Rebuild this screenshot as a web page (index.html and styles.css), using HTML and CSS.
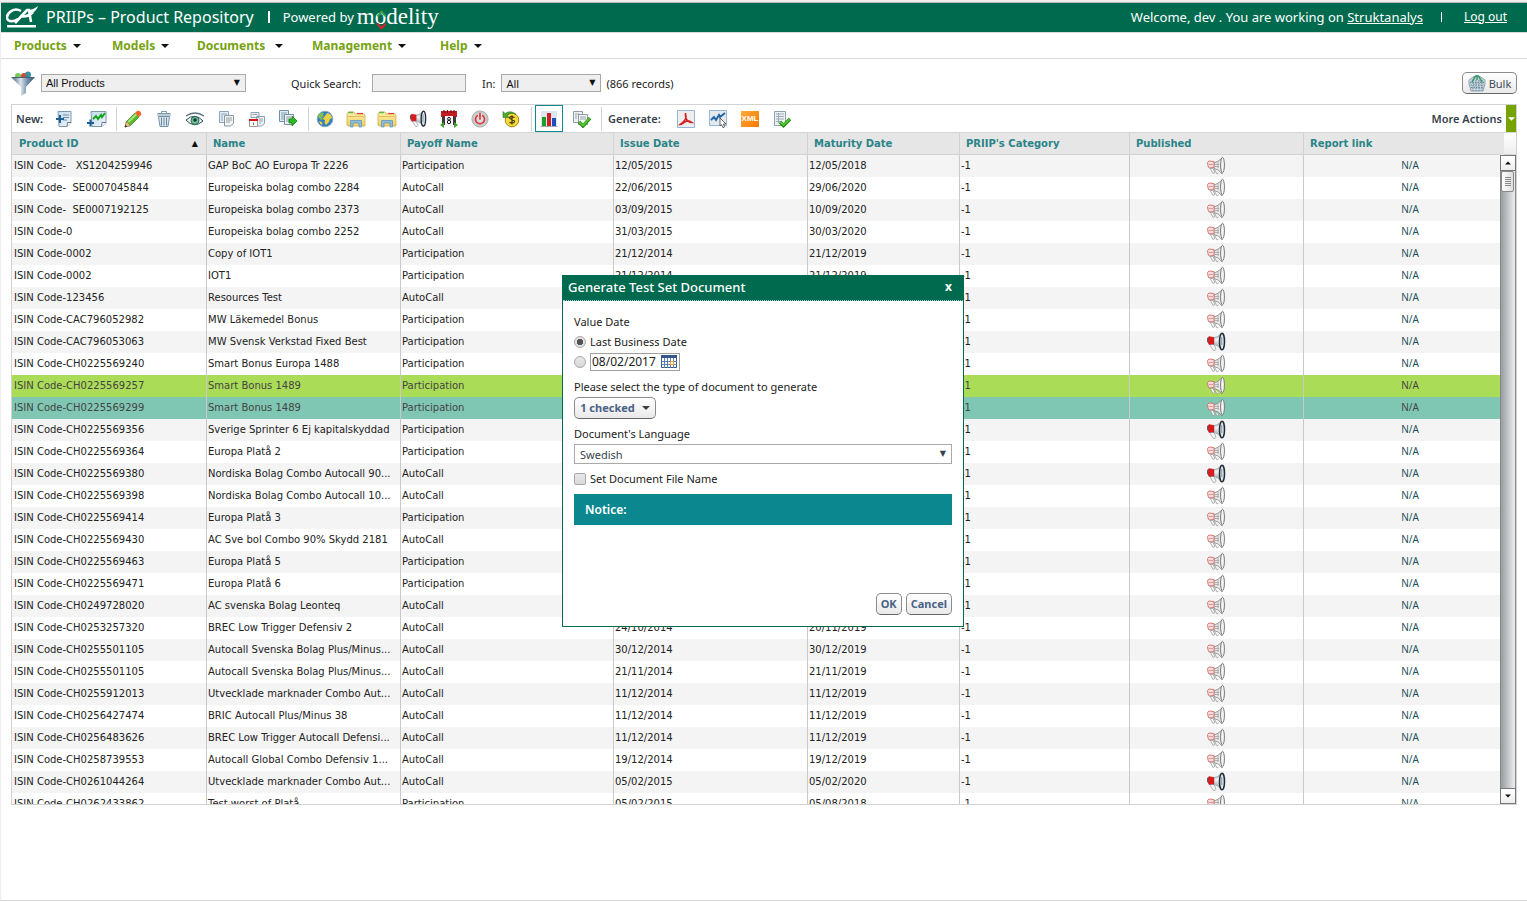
FILE: index.html
```html
<!DOCTYPE html>
<html lang="en">
<head>
<meta charset="utf-8">
<title>PRIIPs – Product Repository</title>
<link rel="stylesheet" href="styles.css">
</head>
<body>
<svg class="sprite" aria-hidden="true">
  <defs>
    <linearGradient id="g-paper" x1="0" y1="0" x2="1" y2="1"><stop offset="0" stop-color="#c3dcf0"/><stop offset="1" stop-color="#eef2f5"/></linearGradient>
    <linearGradient id="g-funnel" x1="0" y1="0" x2="1" y2="0"><stop offset="0" stop-color="#35516b"/><stop offset=".4" stop-color="#dbe5ed"/><stop offset=".65" stop-color="#7d98b0"/><stop offset="1" stop-color="#2f4d6b"/></linearGradient>
    <linearGradient id="g-folder" x1="0" y1="0" x2="0" y2="1"><stop offset="0" stop-color="#fbf0b4"/><stop offset="1" stop-color="#f1d25c"/></linearGradient>
    <linearGradient id="g-horn" x1="0" y1="0" x2="0" y2="1"><stop offset="0" stop-color="#9ba5ab"/><stop offset=".4" stop-color="#f2f4f5"/><stop offset="1" stop-color="#77838a"/></linearGradient>
    <symbol id="doc-add" viewBox="0 0 18 18"><path d="M3 1.500h13v11l-4 4H4z" fill="url(#g-paper)" stroke="#7e99ad"/><path d="M12 16.500l.5-4H16" fill="#fff" stroke="#5e7688"/><path d="M8 5h6M8 7.500h6M8 10h4" stroke="#7590a4"/><path d="M1 9h8M5 5v8" stroke="#1c5f93" stroke-width="2"/></symbol>
    <symbol id="chart-add" viewBox="0 0 20 18"><path d="M4 1.500h15v11l-4 4H5z" fill="url(#g-paper)" stroke="#7e99ad"/><path d="M14.500 16.500l.5-4h4" fill="#fff" stroke="#5e7688"/><path d="M6 9l3-3 2 3 3-4 1 2 3-4" fill="none" stroke="#14a51e" stroke-width="2"/><path d="M0 13h7M3.500 9.500v7" stroke="#1c5f93" stroke-width="2"/></symbol>
    <symbol id="pencil" viewBox="0 0 18 18"><path d="M1 17l1.500-5.500L11 3l4 4-8.500 8.500z" fill="#56b92b" stroke="#3b7f1c" stroke-width=".7"/><path d="M3.500 11.500L12 3l1.500 1.500L5 13z" fill="#a7e277"/><path d="M11 3l2-2q2-.8 3.400.8T17 5l-2 2z" fill="#f0642c"/><path d="M1 17l1.500-5.500 4 4z" fill="#edc48a" stroke="#8a6033" stroke-width=".5"/><path d="M.8 17.200l.7-2.400 1.700 1.700z" fill="#333"/></symbol>
    <symbol id="trash" viewBox="0 0 18 18"><path d="M2 5h14M6.500 3V1.500h5V3M2.500 3.500h13" fill="none" stroke="#7d98ab"/><path d="M3.500 6.500h11L13 16.500H5z" fill="#dbe6ee" stroke="#7593a8"/><path d="M6.500 7.500v8M9 7.500v8M11.500 7.500v8" stroke="#668aa3"/></symbol>
    <symbol id="eye" viewBox="0 0 20 18"><path d="M1 6q9-6 18 0" fill="none" stroke="#5c7183" stroke-width="1.500"/><path d="M1 10q9-8 17 1-9 8-17-1z" fill="#f3f7f7" stroke="#2d4a59"/><circle cx="10" cy="10.500" r="4" fill="#6fc098" stroke="#2c6a56"/><circle cx="10" cy="10" r="1.800" fill="#173c38"/></symbol>
    <symbol id="copy" viewBox="0 0 18 18"><path d="M2.500 1.500h9v11h-9z" fill="#e4edf5" stroke="#8aa6bc"/><path d="M4 4h6M4 6h2M4 8h2M4 10h2" stroke="#8aa6bc"/><path d="M7.500 5.500h9v8l-3 2.500h-6z" fill="#f2f3f3" stroke="#8b969d"/><path d="M9 8h6M9 10h6M9 12h4" stroke="#929ca2"/></symbol>
    <symbol id="doc-lock" viewBox="0 0 18 18"><path d="M3 2.500h8v5H3zM8.500 6.500h8v7l-3 2.500h-5z" fill="#eef2f5" stroke="#8aa0b0"/><path d="M4.500 4.500h5M11 9h4M11 11h4M11 13h2" stroke="#95a2aa"/><path d="M1.500 10.500h8v6h-8z" fill="#fafafa" stroke="#9b9b9b"/><path d="M1 10h9" stroke="#d9121a" stroke-width="2"/><path d="M5.500 12.500v2.500" stroke="#777"/></symbol>
    <symbol id="doc-go" viewBox="0 0 20 18"><path d="M1.500.5h9v11h-9z" fill="#e4edf5" stroke="#6f8ea8"/><path d="M3 3h6M3 5h3M3 7h3M3 9h3" stroke="#7d9bb4"/><path d="M6.500 4.500h9v10h-9z" fill="#edf2f6" stroke="#7991a2"/><path d="M8 7h5M8 9h5M8 11h3" stroke="#8c9ca7"/><path d="M11 9h3V6l5 5-5 5v-3h-3z" fill="#27bd20" stroke="#167b15" stroke-width=".8"/></symbol>
    <symbol id="globe" viewBox="0 0 18 18"><circle cx="9" cy="9" r="7.800" fill="#2f7ccb" stroke="#8aa3b5" stroke-width=".8"/><path d="M1.800 7q.5-3 3.200-4.500L8 3 7 5l1 1-2 1.500.5 2L5 10z" fill="#7fbf52"/><path d="M9 6l2-3q4 .5 5 5l-2 1-1 3-3 3-1.500-2 .5-3-2.500-1z" fill="#ecd23c"/><path d="M3 11l3 1 .5 3q-3-1-3.500-4z" fill="#ecd23c"/></symbol>
    <symbol id="folder" viewBox="0 0 20 18"><path d="M1 15V3.500L3 2h5l1 2h9l1 1v11H2z" fill="url(#g-folder)" stroke="#d0ac49" stroke-width=".8"/><path d="M2 2.500h5" stroke="#63b548" stroke-width="1.500"/><path d="M11 3.500h6" stroke="#dd4234" stroke-width="1.200"/><path d="M1.500 6.500h17" stroke="#e0bc55"/><path d="M4.500 17v-6.500h11V17h-2.500v-4H7v4z" fill="#8abde0" stroke="#5b8eb2" stroke-width=".7"/></symbol>
    <symbol id="horn" viewBox="0 0 20 20"><path d="M4 12l4 .5 2 4.500q-.5 2-2.500 1.500L4.500 14z" fill="#f4f4f4" stroke="#92999c" stroke-width=".7"/><path d="M7 6q5-.5 9-5v17q-4-5-9-6z" fill="url(#g-horn)" stroke="#7d868b" stroke-width=".6"/><path d="M1.500 6L3 4.500l5 1v6.500l-5 .5-1-2z" fill="#e0191c" stroke="#9a2a2b" stroke-width=".5"/><path d="M1 6.500h1.500V10H1z" fill="#55606a"/><ellipse cx="16" cy="9.500" rx="2.500" ry="8.300" fill="#dfe5e8" stroke="#1e2c38" stroke-width="1.500"/><path d="M15.500 5v8" stroke="#9aa6ad" stroke-width="1.500"/></symbol>
    <symbol id="horn-off" viewBox="0 0 20 20"><path d="M4 12l3 .5 2 4-2 1zM8.500 13l2.500 5 1.500-1" fill="#fafafa" stroke="#9b9b9b" stroke-width=".8"/><path d="M8 7q4-1 8-5v16q-3-5-8-5.500z" fill="#e9e9e9" stroke="#8c8c8c" stroke-width=".9"/><path d="M9 8.500h4M9 10.500h4M12 6v6" stroke="#a9a9a9" stroke-width=".9"/><path d="M1.500 6.500L3 5l5 .5v6l-5 .5-1-2z" fill="#f7dad9" stroke="#cc706d" stroke-width=".9"/><path d="M3 8.500h4" stroke="#d98886" stroke-width=".8"/><ellipse cx="16.500" cy="9" rx="1.900" ry="7.700" fill="#f6f6f6" stroke="#777"/></symbol>
    <symbol id="calendar" viewBox="0 0 18 18"><path d="M1 1h16v6H1z" fill="#c51b21"/><path d="M4 0v3M7.500 0v3M11 0v3M14 0v3" stroke="#5c1012"/><path d="M2 6.500h14v8.500H2z" fill="#3a3a3a"/><rect x="5" y="6" width="8" height="10" fill="#f4f4f4"/><circle cx="9" cy="8.800" r="1.400" fill="none" stroke="#111"/><circle cx="9" cy="12" r="1.700" fill="none" stroke="#111"/><path d="M0 15l4-3v6zM18 15l-4-3v6z" fill="#42a32c"/></symbol>
    <symbol id="power" viewBox="0 0 20 20"><circle cx="10" cy="10" r="9" fill="#c9cccf" stroke="#a4a9ad"/><circle cx="10" cy="10" r="7" fill="#dcdfe1" stroke="#aeb3b7" stroke-width=".6"/><path d="M7 6.200a5 5 0 1 0 6 0M10 4v6" fill="none" stroke="#dc3737" stroke-width="1.900" stroke-linecap="round"/></symbol>
    <symbol id="coin" viewBox="0 0 18 18"><circle cx="10" cy="10" r="6.800" fill="#f5d93b" stroke="#a28b18"/><path d="M12.500 7.500q-4.500-1.800-5 .2c0 2 5 1.500 5 3.800-.3 2-3.500 1.800-5 .7M10 5.500v9" fill="none" stroke="#3e3508" stroke-width="1.200"/><path d="M1 1.500v6h6L5 5.500q4-4 9-1Q9-.5 3 3.500z" fill="#4bac35" stroke="#2b7420" stroke-width=".6"/></symbol>
    <symbol id="bars" viewBox="0 0 18 18"><path d="M1 1h16v15H1z" fill="#dde5f0"/><path d="M2 7h4v9H2z" fill="#18a026"/><path d="M7 3h4v13H7z" fill="#cf1f22"/><path d="M12 8h4v8h-4z" fill="#1c4fc0"/><path d="M.5 16.500h17" stroke="#a0a9b7"/></symbol>
    <symbol id="docs-ok" viewBox="0 0 20 18"><path d="M2.500 1.500h9v11h-9z" fill="#eef2f5" stroke="#8c9caa"/><path d="M7.500 4.500h9v10h-9z" fill="#f2f4f5" stroke="#8f9ba3"/><path d="M9 7h6M9 9h6M4 4h4M4 6h2M4 8h2" stroke="#9aa6ae"/><path d="M8 12l4 4 7-8" fill="none" stroke="#23811a" stroke-width="3.400"/><path d="M8.300 12l3.700 3.500 6.500-7.200" fill="none" stroke="#56c92c" stroke-width="2"/></symbol>
    <symbol id="pdf" viewBox="0 0 18 18"><path d="M.5.5h17v17H.5z" fill="#eee" stroke="#92b8d5"/><path d="M8.500 3q1 4 0 6T3 14.500q2 0 5-2.500t7 .5q-3 0-5-2.500T8.500 3" fill="none" stroke="#d51f22" stroke-width="1.500"/></symbol>
    <symbol id="trend" viewBox="0 0 18 18"><path d="M.5.5h17v15H.5z" fill="#e5e9ed" stroke="#92b8d5"/><path d="M2 10l3-3 2 3 3-5 1 2 5-4" fill="none" stroke="#1f66a8" stroke-width="1.900"/><path d="M11 8l6 6h-2.500l1 3-1.500.7-1.500-3L11 16z" fill="#fff" stroke="#444" stroke-width=".8"/></symbol>
    <symbol id="sheet-ok" viewBox="0 0 18 18"><path d="M1.500 1.500h11v14h-11z" fill="#eef1f3" stroke="#8ca0ae"/><path d="M3 4h8M3 6.500h8M3 9h8M3 11.500h5M5.500 3v10" stroke="#9cabb6"/><path d="M7 12l3.500 3.500L17 9" fill="none" stroke="#23811a" stroke-width="3.400"/><path d="M7.300 12l3.200 3L16.600 9.300" fill="none" stroke="#56c92c" stroke-width="2"/></symbol>
    <symbol id="caret" viewBox="0 0 8 4"><path d="M0 0h8L4 4z" fill="currentColor"/></symbol>
  </defs>
</svg>
<div class="page">
  <header class="topbar">
    <svg class="brand" viewBox="0 0 32 24" aria-hidden="true"><path d="M15 5Q9 1.500 4 6t-2 8q4 3 10-1" fill="none" stroke="#fff" stroke-width="2.600"/><path d="M9 17L21 4h2l2 12M14 10q7 2 13-4" fill="none" stroke="#fff" stroke-width="2.600"/><path d="M22 4q5 0 10-4-1 5-8 8z" fill="#fff"/><path d="M1 19h29v2.500H1z" fill="#fff"/></svg>
    <h1 class="title">PRIIPs – Product Repository</h1>
    <span class="bar"></span>
    <span class="powered">Powered by</span>
    <span class="modelity">m<span class="ring">o</span>delity</span>
    <span class="welcome">Welcome, dev . You are working on <a href="#">Struktanalys</a></span>
    <span class="bar small"></span>
    <a class="logout" href="#">Log out</a>
  </header>
  <nav class="menu">
    <button>Products<svg class="caret"><use href="#caret"/></svg></button>
    <button>Models<svg class="caret"><use href="#caret"/></svg></button>
    <button class="wide">Documents<svg class="caret"><use href="#caret"/></svg></button>
    <button>Management<svg class="caret"><use href="#caret"/></svg></button>
    <button>Help<svg class="caret"><use href="#caret"/></svg></button>
  </nav>
  <main class="content">
    <div class="filters">
      <svg class="funnel" viewBox="0 0 24 25" aria-hidden="true"><circle cx="7" cy="5" r="3" fill="#73cb54"/><circle cx="13" cy="5" r="3" fill="#d8442e"/><circle cx="17" cy="3.500" r="3" fill="#3a8fa0"/><path d="M0 6h24l-9 10v6l-5 3v-9z" fill="url(#g-funnel)"/><path d="M1 6.500h22" stroke="#44617b"/></svg>
      <span class="select all"><select aria-label="Product filter"><option>All Products</option></select></span>
      <label class="qs" for="quick">Quick Search:</label>
      <input class="quick" id="quick" type="text">
      <label class="in" for="scope">In:</label>
      <span class="select scope"><select id="scope"><option>All</option></select></span>
      <span class="records">(866 records)</span>
      <button class="btn bulk"><svg viewBox="0 0 18 18" aria-hidden="true"><path d="M1 6q8-8 16 0v4l-2 7H3L1 10z" fill="#c3d2dc" stroke="#8fa5b3"/><path d="M2 8.500h14M2.500 11h13M3 13.500h12M5 6v11M8 6v11M11 6v11M14 6v11" stroke="#6d8798" stroke-dasharray="1.500 1"/><path d="M4 8l3.500-6h3L14 8M9 1v5" fill="none" stroke="#3f9a70" stroke-width="1.500"/></svg>Bulk</button>
    </div>
    <section class="box">
      <div class="toolbar">
        <div class="group new"><b>New:</b>
          <button aria-label="New document"><svg><use href="#doc-add"/></svg></button><button aria-label="New chart"><svg class="w20"><use href="#chart-add"/></svg></button></div>
        <div class="group edit">
          <button aria-label="Edit"><svg><use href="#pencil"/></svg></button><button aria-label="Delete"><svg><use href="#trash"/></svg></button><button aria-label="View"><svg class="w20"><use href="#eye"/></svg></button><button aria-label="Copy"><svg><use href="#copy"/></svg></button><button aria-label="Lock"><svg><use href="#doc-lock"/></svg></button><button aria-label="Move"><svg class="w20"><use href="#doc-go"/></svg></button></div>
        <div class="group manage">
          <button aria-label="Web"><svg><use href="#globe"/></svg></button><button aria-label="Folder"><svg class="w20"><use href="#folder"/></svg></button><button aria-label="Shared folder"><svg class="w20"><use href="#folder"/></svg></button><button aria-label="Publish"><svg><use href="#horn"/></svg></button><button aria-label="Calendar"><svg><use href="#calendar"/></svg></button><button aria-label="Power"><svg class="w20"><use href="#power"/></svg></button><button aria-label="Price"><svg><use href="#coin"/></svg></button></div>
        <div class="group view">
          <button class="active" aria-label="Charts"><svg><use href="#bars"/></svg></button><button aria-label="Approve"><svg class="w20"><use href="#docs-ok"/></svg></button></div>
        <div class="group generate"><b>Generate:</b>
          <button aria-label="PDF"><svg><use href="#pdf"/></svg></button><button aria-label="Trend"><svg><use href="#trend"/></svg></button><button aria-label="XML"><span class="xml">XML</span></button><button aria-label="Test set"><svg><use href="#sheet-ok"/></svg></button></div>
        <b class="more">More Actions</b>
        <button class="more-btn" aria-label="More actions"><svg class="caret"><use href="#caret"/></svg></button>
      </div>
      <div class="grid">
        <div class="rows">
          <table>
            <colgroup><col class="c1"><col class="c2"><col class="c3"><col class="c4"><col class="c5"><col class="c6"><col class="c7"><col></colgroup>
            <thead><tr><th><span class="sorted">Product ID<span class="sort">▲</span></span></th><th>Name</th><th>Payoff Name</th><th>Issue Date</th><th>Maturity Date</th><th>PRIIP's Category</th><th>Published</th><th>Report link</th></tr></thead>
            <tbody>
<tr><td>ISIN Code-&nbsp;&nbsp; XS1204259946</td><td>GAP BoC AO Europa Tr 2226</td><td>Participation</td><td>12/05/2015</td><td>12/05/2018</td><td>-1</td><td><svg><use href="#horn-off"/></svg></td><td>N/A</td></tr>
<tr><td>ISIN Code-&nbsp; SE0007045844</td><td>Europeiska bolag combo 2284</td><td>AutoCall</td><td>22/06/2015</td><td>29/06/2020</td><td>-1</td><td><svg><use href="#horn-off"/></svg></td><td>N/A</td></tr>
<tr><td>ISIN Code-&nbsp; SE0007192125</td><td>Europeiska bolag combo 2373</td><td>AutoCall</td><td>03/09/2015</td><td>10/09/2020</td><td>-1</td><td><svg><use href="#horn-off"/></svg></td><td>N/A</td></tr>
<tr><td>ISIN Code-0</td><td>Europeiska bolag combo 2252</td><td>AutoCall</td><td>31/03/2015</td><td>30/03/2020</td><td>-1</td><td><svg><use href="#horn-off"/></svg></td><td>N/A</td></tr>
<tr><td>ISIN Code-0002</td><td>Copy of IOT1</td><td>Participation</td><td>21/12/2014</td><td>21/12/2019</td><td>-1</td><td><svg><use href="#horn-off"/></svg></td><td>N/A</td></tr>
<tr><td>ISIN Code-0002</td><td>IOT1</td><td>Participation</td><td>21/12/2014</td><td>21/12/2019</td><td>-1</td><td><svg><use href="#horn-off"/></svg></td><td>N/A</td></tr>
<tr><td>ISIN Code-123456</td><td>Resources Test</td><td>AutoCall</td><td></td><td></td><td>-1</td><td><svg><use href="#horn-off"/></svg></td><td>N/A</td></tr>
<tr><td>ISIN Code-CAC796052982</td><td>MW Läkemedel Bonus</td><td>Participation</td><td></td><td></td><td>-1</td><td><svg><use href="#horn-off"/></svg></td><td>N/A</td></tr>
<tr><td>ISIN Code-CAC796053063</td><td>MW Svensk Verkstad Fixed Best</td><td>Participation</td><td></td><td></td><td>-1</td><td><svg><use href="#horn"/></svg></td><td>N/A</td></tr>
<tr><td>ISIN Code-CH0225569240</td><td>Smart Bonus Europa 1488</td><td>Participation</td><td></td><td></td><td>-1</td><td><svg><use href="#horn-off"/></svg></td><td>N/A</td></tr>
<tr class="hover"><td>ISIN Code-CH0225569257</td><td>Smart Bonus 1489</td><td>Participation</td><td></td><td></td><td>-1</td><td><svg><use href="#horn-off"/></svg></td><td>N/A</td></tr>
<tr class="selected"><td>ISIN Code-CH0225569299</td><td>Smart Bonus 1489</td><td>Participation</td><td></td><td></td><td>-1</td><td><svg><use href="#horn-off"/></svg></td><td>N/A</td></tr>
<tr><td>ISIN Code-CH0225569356</td><td>Sverige Sprinter 6 Ej kapitalskyddad</td><td>Participation</td><td></td><td></td><td>-1</td><td><svg><use href="#horn"/></svg></td><td>N/A</td></tr>
<tr><td>ISIN Code-CH0225569364</td><td>Europa Platå 2</td><td>Participation</td><td></td><td></td><td>-1</td><td><svg><use href="#horn-off"/></svg></td><td>N/A</td></tr>
<tr><td>ISIN Code-CH0225569380</td><td>Nordiska Bolag Combo Autocall 90...</td><td>AutoCall</td><td></td><td></td><td>-1</td><td><svg><use href="#horn"/></svg></td><td>N/A</td></tr>
<tr><td>ISIN Code-CH0225569398</td><td>Nordiska Bolag Combo Autocall 10...</td><td>AutoCall</td><td></td><td></td><td>-1</td><td><svg><use href="#horn-off"/></svg></td><td>N/A</td></tr>
<tr><td>ISIN Code-CH0225569414</td><td>Europa Platå 3</td><td>Participation</td><td></td><td></td><td>-1</td><td><svg><use href="#horn-off"/></svg></td><td>N/A</td></tr>
<tr><td>ISIN Code-CH0225569430</td><td>AC Sve bol Combo 90% Skydd 2181</td><td>AutoCall</td><td></td><td></td><td>-1</td><td><svg><use href="#horn-off"/></svg></td><td>N/A</td></tr>
<tr><td>ISIN Code-CH0225569463</td><td>Europa Platå 5</td><td>Participation</td><td></td><td></td><td>-1</td><td><svg><use href="#horn-off"/></svg></td><td>N/A</td></tr>
<tr><td>ISIN Code-CH0225569471</td><td>Europa Platå 6</td><td>Participation</td><td></td><td></td><td>-1</td><td><svg><use href="#horn-off"/></svg></td><td>N/A</td></tr>
<tr><td>ISIN Code-CH0249728020</td><td>AC svenska Bolag Leonteq</td><td>AutoCall</td><td></td><td></td><td>-1</td><td><svg><use href="#horn-off"/></svg></td><td>N/A</td></tr>
<tr><td>ISIN Code-CH0253257320</td><td>BREC Low Trigger Defensiv 2</td><td>AutoCall</td><td>24/10/2014</td><td>20/11/2019</td><td>-1</td><td><svg><use href="#horn-off"/></svg></td><td>N/A</td></tr>
<tr><td>ISIN Code-CH0255501105</td><td>Autocall Svenska Bolag Plus/Minus...</td><td>AutoCall</td><td>30/12/2014</td><td>30/12/2019</td><td>-1</td><td><svg><use href="#horn-off"/></svg></td><td>N/A</td></tr>
<tr><td>ISIN Code-CH0255501105</td><td>Autocall Svenska Bolag Plus/Minus...</td><td>AutoCall</td><td>21/11/2014</td><td>21/11/2019</td><td>-1</td><td><svg><use href="#horn-off"/></svg></td><td>N/A</td></tr>
<tr><td>ISIN Code-CH0255912013</td><td>Utvecklade marknader Combo Aut...</td><td>AutoCall</td><td>11/12/2014</td><td>11/12/2019</td><td>-1</td><td><svg><use href="#horn-off"/></svg></td><td>N/A</td></tr>
<tr><td>ISIN Code-CH0256427474</td><td>BRIC Autocall Plus/Minus 38</td><td>AutoCall</td><td>11/12/2014</td><td>11/12/2019</td><td>-1</td><td><svg><use href="#horn-off"/></svg></td><td>N/A</td></tr>
<tr><td>ISIN Code-CH0256483626</td><td>BREC Low Trigger Autocall Defensi...</td><td>AutoCall</td><td>11/12/2014</td><td>11/12/2019</td><td>-1</td><td><svg><use href="#horn-off"/></svg></td><td>N/A</td></tr>
<tr><td>ISIN Code-CH0258739553</td><td>Autocall Global Combo Defensiv 1...</td><td>AutoCall</td><td>19/12/2014</td><td>19/12/2019</td><td>-1</td><td><svg><use href="#horn-off"/></svg></td><td>N/A</td></tr>
<tr><td>ISIN Code-CH0261044264</td><td>Utvecklade marknader Combo Aut...</td><td>AutoCall</td><td>05/02/2015</td><td>05/02/2020</td><td>-1</td><td><svg><use href="#horn"/></svg></td><td>N/A</td></tr>
<tr><td>ISIN Code-CH0262433862</td><td>Test worst of Platå</td><td>Participation</td><td>05/02/2015</td><td>05/08/2018</td><td>-1</td><td><svg><use href="#horn-off"/></svg></td><td>N/A</td></tr>
            </tbody>
          </table>
        </div>
        <div class="scroll">
          <div class="corner"></div>
          <button class="step" aria-label="Scroll up"><svg class="caret up"><use href="#caret"/></svg></button>
          <div class="track"><div class="thumb"></div></div>
          <button class="step" aria-label="Scroll down"><svg class="caret"><use href="#caret"/></svg></button>
        </div>
      </div>
    </section>
  </main>
</div>
<div class="overlay">
  <form class="dialog" role="dialog" aria-labelledby="dlg-title">
    <div class="dlg-head"><h2 id="dlg-title">Generate Test Set Document</h2><button type="button" class="close" aria-label="Close">x</button></div>
    <div class="dlg-body">
      <p>Value Date</p>
      <label class="line"><input type="radio" name="date" checked>Last Business Date</label>
      <div class="line"><input type="radio" name="date" aria-label="Specific date"><span class="date"><input type="text" value="08/02/2017" aria-label="Date"><svg viewBox="0 0 16 13" aria-hidden="true"><path d="M.5.500h15v12H.5z" fill="#fff" stroke="#33578a"/><path d="M0 0h16v3H0z" fill="#33578a"/><path d="M3.500 3v10M6.500 3v10M9.500 3v10M12.500 3v10M0 6.500h16M0 9.500h16" stroke="#5b7fae"/><path d="M9.500 6.500h3v3h-3z" fill="#fff" stroke="#f0a030"/></svg></span></div>
      <p class="types">Please select the type of document to generate</p>
      <button type="button" class="btn checked">1 checked<svg class="caret"><use href="#caret"/></svg></button>
      <label class="lang" for="lang">Document's Language</label>
      <span class="select lang-select"><select id="lang"><option>Swedish</option></select></span>
      <label class="line file"><input type="checkbox">Set Document File Name</label>
      <div class="notice">Notice:</div>
      <div class="actions"><button type="button" class="btn">OK</button><button type="button" class="btn">Cancel</button></div>
    </div>
  </form>
</div>
</body>
</html>
```
FILE: styles.css
```css
* { box-sizing: border-box; }
body { margin: 0; background: #fff; color: #222; font: 11px "Noto Sans", sans-serif; }
button, input, select { font: inherit; color: inherit; margin: 0; padding: 0; border: 0; background: none; }
a { color: inherit; }
h1, h2, p { margin: 0; }
.sprite { position: absolute; width: 0; height: 0; }
.caret { width: 8px; height: 4px; flex: none; display: block; }
.page { display: flex; flex-direction: column; height: 100vh; border-top: 2px solid #efefef; border-left: 1px solid #ececec; border-bottom: 1px solid #d6d6d6; }

.topbar { display: flex; align-items: center; height: 31px; padding: 0 20px 2px 5px; color: #fff; background: #006a4e; border-top: 1px solid #b9b9b9; border-bottom: 1px solid #d9d9d9; flex: none; }
.brand { width: 32px; height: 24px; margin-right: 8px; align-self: flex-end; }
.title { font-size: 16px; font-weight: 400; line-height: 22px; }
.bar { width: 2px; height: 12px; margin: 0 13px 0 14px; background: #fff; }
.bar.small { width: 1px; height: 10px; margin: 0 22px 0 18px; }
.powered { font-size: 13px; line-height: 20px; }
.modelity { font: 23px/24px "Liberation Serif", serif; margin-left: 3px; }
.ring { position: relative; }
.ring::before, .ring::after { content: ""; position: absolute; left: 50%; width: 5px; height: 5px; margin-left: -3px; border: solid #3f9f49; border-width: 2px 0 0 2px; rotate: 45deg; top: 8px; }
.ring::after { border-color: #d8232e; border-width: 0 2px 2px 0; top: 17px; }
.welcome { margin-left: auto; font-size: 13px; line-height: 20px; }
.logout { font-size: 12px; line-height: 20px; }

.menu { display: grid; grid-template-columns: 98px 85px 115px 128px auto; justify-content: start; height: 26px; padding-left: 13px; border-bottom: 1px solid #d9d9d9; flex: none; }
.menu button { display: flex; align-items: center; gap: 6px; color: #76a30f; font-size: 12px; font-weight: 700; }
.menu .caret { color: #111; }
.menu .wide { gap: 10px; }

.content { flex: 1; min-height: 0; display: flex; flex-direction: column; padding: 0 10px 95px 10px; }
.filters { display: flex; align-items: center; height: 45px; padding-top: 3px; flex: none; }
.funnel { width: 24px; height: 25px; margin-right: 6px; }
.select { position: relative; display: block; }
.select select { appearance: none; display: block; width: 100%; height: 18px; padding: 0 4px; border: 1px solid #a9a9a9; background: #efefef; color: #111; }
.select::after { content: "▼"; position: absolute; right: 6px; top: 0; font: 8px/18px "DejaVu Sans", sans-serif; color: #111; pointer-events: none; }
.all { width: 205px; font-family: "Liberation Sans", sans-serif; }
.qs { width: 81px; margin-left: 45px; }
.quick { width: 94px; height: 18px; border: 1px solid #a9a9a9; background: #efefef; }
.in { margin: 0 6px 0 16px; }
.scope { width: 100px; }
.records { margin-left: 5px; }
.btn { display: flex; align-items: center; justify-content: center; height: 22px; border: 1px solid #8c8c8c; border-bottom-color: #666; border-radius: 5px; background: linear-gradient(#fff, #e9e9e9); color: #4a6285; font-weight: 700; }
.bulk { margin-left: auto; gap: 3px; width: 55px; color: #3f4a55; font-weight: 400; }
.bulk svg { width: 18px; height: 18px; }

.box { flex: 1; min-height: 0; display: flex; flex-direction: column; border: 1px solid #d2d2d2; }
.toolbar { display: flex; align-items: center; height: 28px; flex: none; border-bottom: 1px solid #d6d6d6; }
.group { display: flex; align-items: center; height: 24px; border-right: 1px solid #d2d2d2; }
.group button { display: grid; place-items: center; width: 31px; height: 27px; }
.group svg { width: 18px; height: 18px; }
.group .w20 { width: 20px; }
.toolbar b { color: #35424c; font-size: 11px; font-weight: 600; }
.new { width: 105px; padding: 0 3px 0 4px; justify-content: space-between; }
.new b { flex: 1; }
.new button { width: 33px; }
.edit { width: 192px; }
.manage { width: 223px; }
.view { width: 70px; gap: 2px; padding-left: 3px; }
.view .active { width: 28px; border: 1px solid #0e8a90; }
.generate { border: 0; padding-left: 6px; }
.generate b { width: 62px; }
.generate button { width: 32px; }
.xml { width: 18px; height: 16px; background: linear-gradient(135deg, #ffab3a, #f87800); color: #fff; font: bold 8px/16px "Liberation Sans", sans-serif; text-align: center; }
.more { margin-left: auto; margin-right: 4px; }
.more-btn { display: grid; place-items: center; width: 10px; height: 27px; background: #76a300; color: #fff; }
.more-btn .caret { width: 7px; }

.grid { flex: 1; min-height: 0; display: flex; }
.rows { flex: 1; overflow: hidden; }
table { width: 100%; table-layout: fixed; border-collapse: separate; border-spacing: 0; font: 10px "DejaVu Sans", sans-serif; }
.c1 { width: 195px; } .c2 { width: 194px; } .c3 { width: 213px; } .c4 { width: 194px; }
.c5 { width: 152px; } .c6 { width: 170px; } .c7 { width: 174px; }
th, td { height: 22px; padding: 0 0 0 1px; text-align: left; white-space: nowrap; overflow: hidden; border-right: 1px solid #c9c9c9; line-height: 12px; }
td:first-child { padding-left: 2px; }
td:last-child, th:last-child { border-right: 0; }
th { background: #e6e6e6; color: #2a8488; padding-left: 6px; border-right-color: #d2d2d2; border-bottom: 1px solid #d2d2d2; }
th:first-child { padding-left: 7px; }
.sorted { display: flex; justify-content: space-between; padding-right: 8px; }
.sort { color: #111; font-size: 8px; }
tbody tr:nth-child(odd) { background: #f4f4f4; }
tbody tr.hover { background: #abdc57; color: #444; }
tbody tr.selected { background: #80c7b3; color: #444; }
td:nth-child(7) { text-align: center; padding: 0 2px 0 0; }
td svg { width: 20px; height: 20px; display: block; margin: 0 auto; }
td:nth-child(8) { text-align: center; padding-left: 16px; padding-bottom: 2px; line-height: 10px; font-family: "Noto Sans", sans-serif; color: #22505c; }
.hover td:nth-child(8), .selected td:nth-child(8) { color: #444; }
.scroll { width: 16px; display: flex; flex-direction: column; background: #e6e6e6; }
.corner { height: 22px; margin-left: 4px; background: linear-gradient(#fff, #eee); border-bottom: 1px solid #d2d2d2; }
.step { display: grid; place-items: center; height: 16px; border: 1px solid #777; background: linear-gradient(#fff, #eee); color: #111; }
.step .caret { width: 6px; }
.up { rotate: 180deg; }
.track { flex: 1; border: solid #888; border-width: 0 1px; background: linear-gradient(90deg, #989da1, #eee); }
.thumb { height: 21px; width: 13px; border: 1px solid #888; border-radius: 2px; background: repeating-linear-gradient(#888 0 1px, transparent 1px 2px) center / 6px 9px no-repeat, linear-gradient(90deg, #fff, #ddd); }

.overlay { position: fixed; inset: 0; display: grid; place-items: center; padding-right: 1px; }
.dialog { width: 402px; border: 1px solid #006a4e; background: #fff; }
.dlg-head { display: flex; align-items: center; justify-content: space-between; height: 25px; padding: 0 11px 2px 5px; color: #fff; background: #006a4e; border-bottom: 1px dotted #9fc7d4; }
.dlg-head h2 { font-size: 13px; line-height: 20px; font-weight: 500; }
.close { font-size: 12px; font-weight: 700; }
.dlg-body { display: flex; flex-direction: column; padding: 11px; line-height: 20px; }
.line { display: flex; align-items: center; gap: 4px; height: 20px; }
.line > input { appearance: none; width: 12px; height: 12px; border: 1px solid #a8a8a8; background: linear-gradient(#e8e8e8, #d8d8d8); flex: none; }
.line > input[type=radio] { border-radius: 50%; }
.line > input:checked { background: radial-gradient(circle, #555 0 3px, #e4e4e4 3px); }
.line > input[type=checkbox] { border-radius: 2px; }
.date { display: flex; align-items: center; width: 90px; height: 18px; padding: 0 2px 0 1px; border: 1px solid #a0a0a0; }
.date input { flex: 1; min-width: 0; font-size: 12px; height: 16px; }
.date svg { width: 16px; height: 13px; flex: none; }
.types { margin-top: 5px; }
.checked { align-self: flex-start; width: 82px; gap: 7px; }
.checked .caret { color: #35424c; }
.lang { margin-top: 5px; }
.lang-select select { height: 20px; padding: 0 5px; background: #fff; color: #35424c; }
.lang-select::after { line-height: 20px; color: #35424c; }
.file { margin-top: 5px; }
.notice { height: 31px; margin: 5px 0 68px; padding-left: 11px; background: #0b888f; color: #fff; font-size: 12px; font-weight: 600; line-height: 31px; }
.actions { display: flex; justify-content: flex-end; gap: 4px; }
.actions .btn { padding: 0 4px; }
```
